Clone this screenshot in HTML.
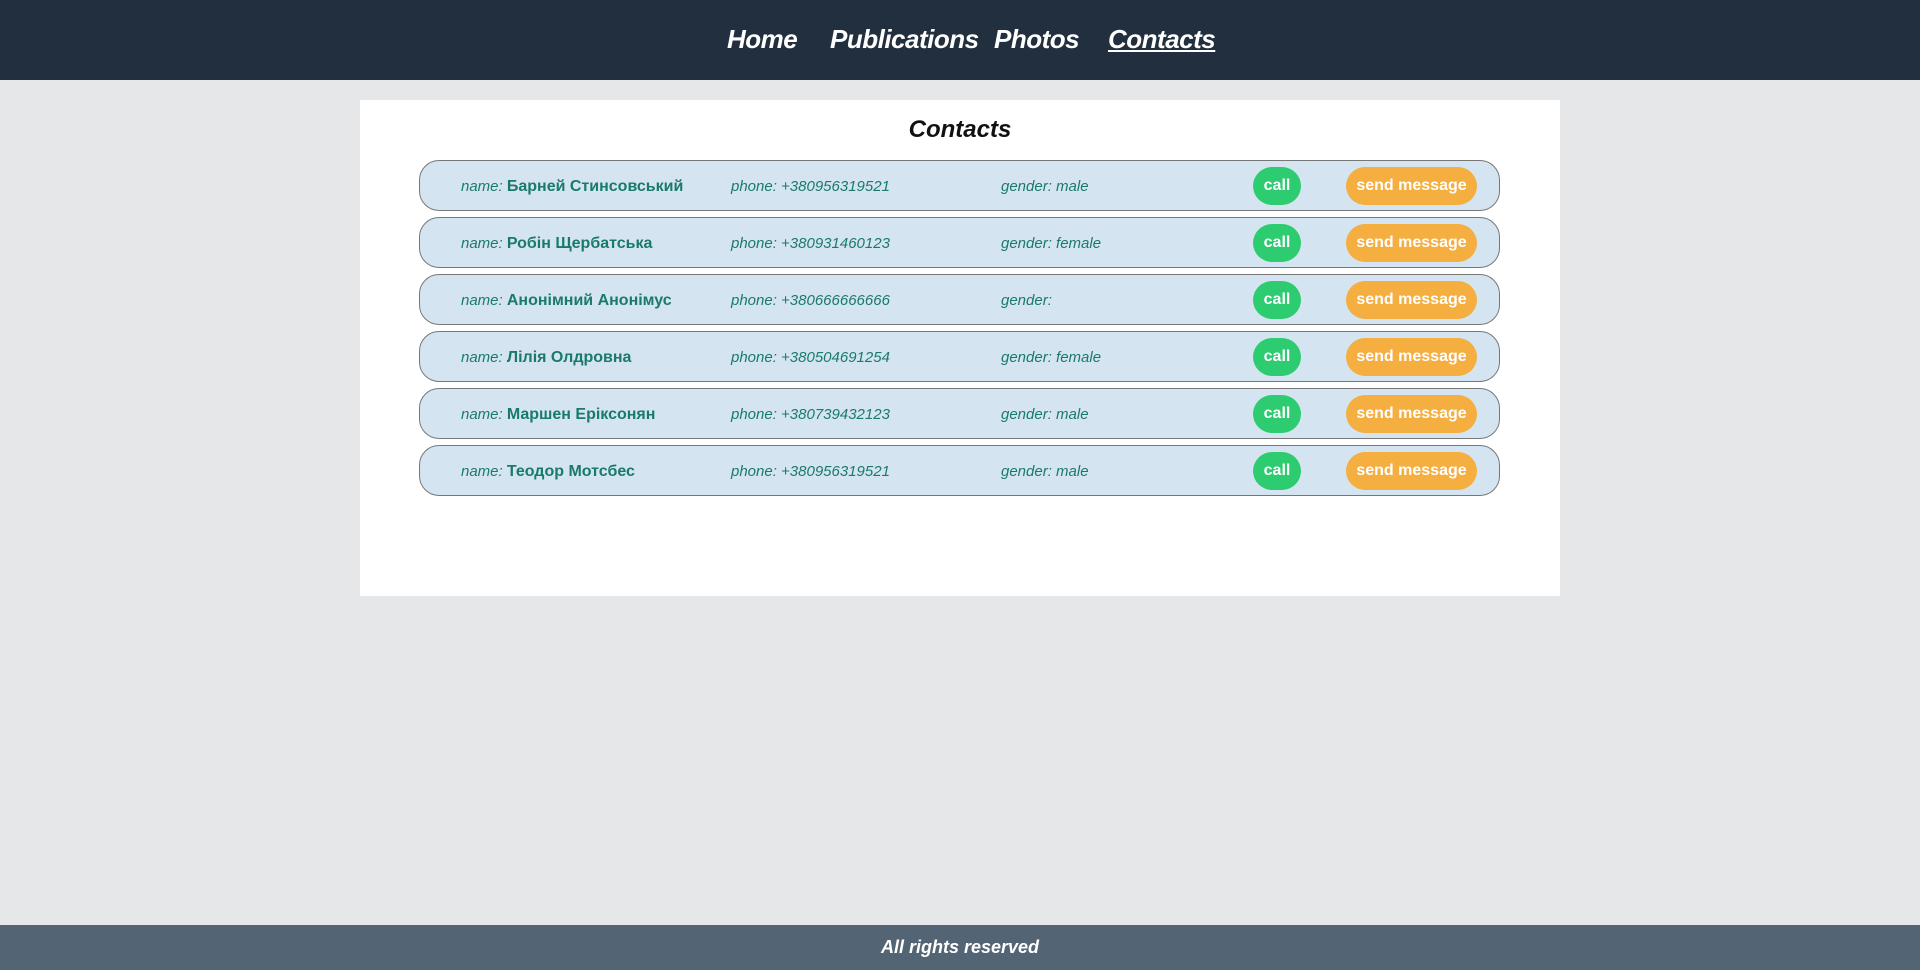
<!DOCTYPE html>
<html><head><meta charset="utf-8"><style>
*{margin:0;padding:0;box-sizing:border-box}
body{width:1920px;height:970px;background:#e5e7e9;font-family:"Liberation Sans Narrow","Liberation Sans",sans-serif;position:relative;overflow:hidden}
header{height:80px;background:#212f3e;position:relative}
header a{position:absolute;top:24px;color:#fff;font-size:26px;font-weight:bold;font-style:italic;text-decoration:none;letter-spacing:-0.5px}
.panel{position:absolute;left:360px;top:100px;width:1200px;height:496px;background:#fff}
h1{position:absolute;top:16px;width:100%;text-align:center;font-size:24px;font-style:italic;color:#111}
.card{position:absolute;left:59px;width:1081px;height:51px;background:#d4e5f1;border:1px solid #777;border-radius:20px;color:#1a7a6a}
.card span{position:absolute;top:17px;font-size:15px;font-style:italic}
.card b{font-style:normal;font-size:16px}
.call,.msg{position:absolute;top:6px;height:38px;border-radius:19px;color:#fff;font-family:"Liberation Sans",sans-serif;font-weight:bold;font-size:16px;line-height:38px;text-align:center}
.call{left:833px;width:48px;background:#2ecc71}
.msg{left:926px;width:131px;background:#f5ae40}
footer{position:absolute;left:0;top:925px;width:1920px;height:45px;background:#536474;color:#fff;text-align:center;font-size:18px;font-weight:bold;font-style:italic;line-height:45px}
</style></head><body>
<header>
<a style="left:727px">Home</a>
<a style="left:830px">Publications</a>
<a style="left:994px">Photos</a>
<a style="left:1108px;text-decoration:underline">Contacts</a>
</header>
<div class="panel">
<h1>Contacts</h1>
<div class="card" style="top:60px"><span style="left:41px">name: <b>Барней Стинсовський</b></span><span style="left:311px">phone: +380956319521</span><span style="left:581px">gender: male</span><div class="call">call</div><div class="msg">send message</div></div>
<div class="card" style="top:117px"><span style="left:41px">name: <b>Робін Щербатська</b></span><span style="left:311px">phone: +380931460123</span><span style="left:581px">gender: female</span><div class="call">call</div><div class="msg">send message</div></div>
<div class="card" style="top:174px"><span style="left:41px">name: <b>Анонімний Анонімус</b></span><span style="left:311px">phone: +380666666666</span><span style="left:581px">gender:</span><div class="call">call</div><div class="msg">send message</div></div>
<div class="card" style="top:231px"><span style="left:41px">name: <b>Лілія Олдровна</b></span><span style="left:311px">phone: +380504691254</span><span style="left:581px">gender: female</span><div class="call">call</div><div class="msg">send message</div></div>
<div class="card" style="top:288px"><span style="left:41px">name: <b>Маршен Еріксонян</b></span><span style="left:311px">phone: +380739432123</span><span style="left:581px">gender: male</span><div class="call">call</div><div class="msg">send message</div></div>
<div class="card" style="top:345px"><span style="left:41px">name: <b>Теодор Мотсбес</b></span><span style="left:311px">phone: +380956319521</span><span style="left:581px">gender: male</span><div class="call">call</div><div class="msg">send message</div></div>
</div>
<footer>All rights reserved</footer>
</body></html>
